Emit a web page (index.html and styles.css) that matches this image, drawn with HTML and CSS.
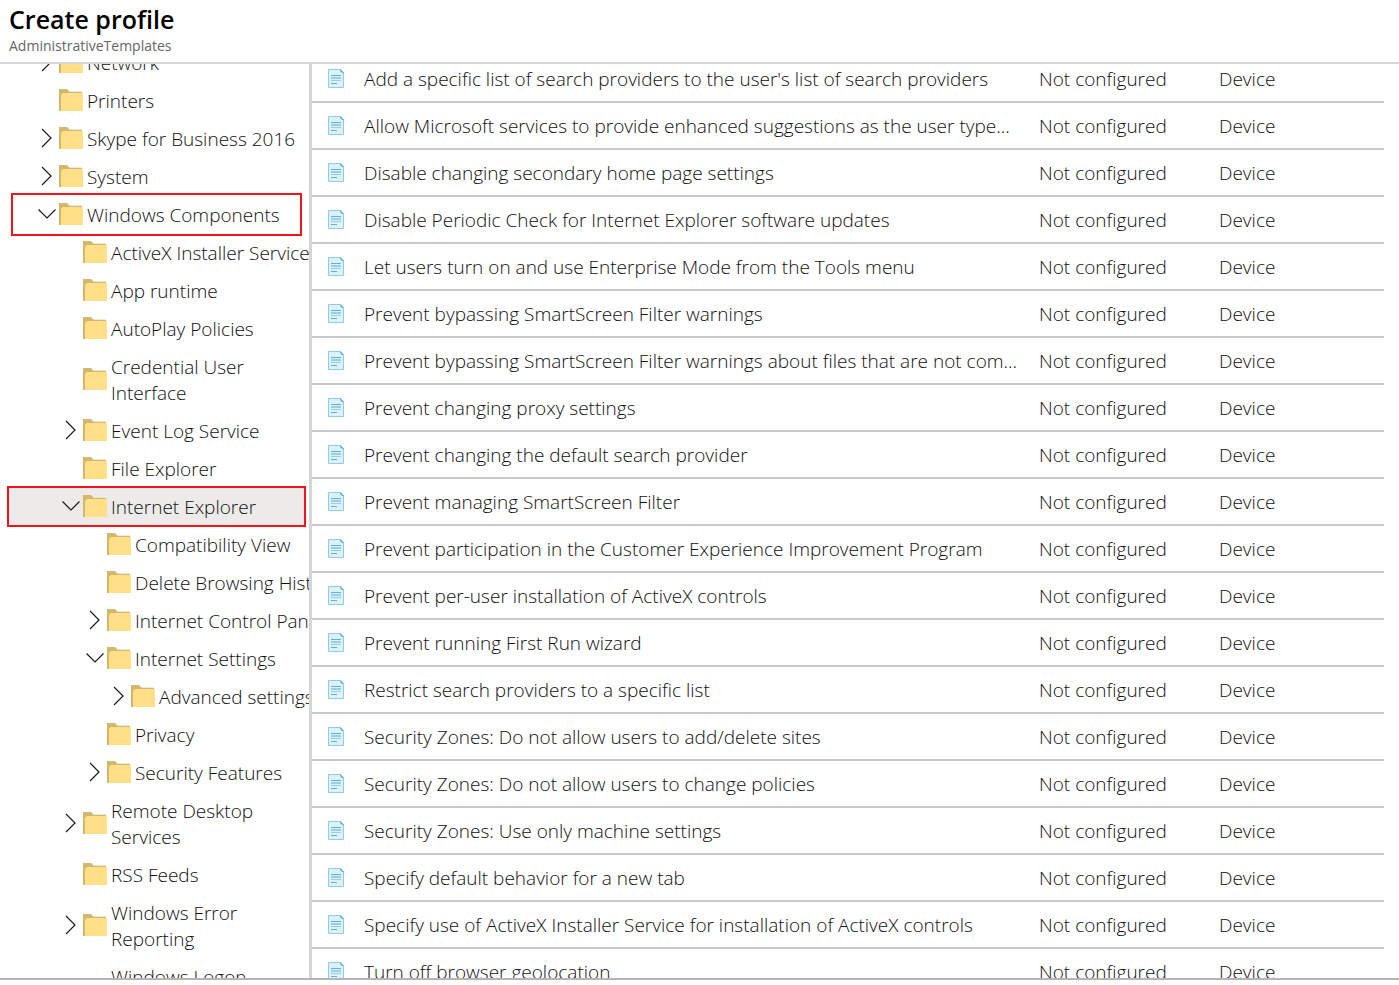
FILE: index.html
```html
<!DOCTYPE html>
<html lang="en">
<head>
<meta charset="utf-8">
<meta name="viewport" content="width=device-width, initial-scale=1">
<title>Create profile</title>
<link rel="stylesheet" href="styles.css">
</head>
<body>
<header class="header">
  <h1 class="title">Create profile</h1>
  <p class="subtitle">AdministrativeTemplates</p>
</header>
<main class="body">
  <nav class="tree-pane" aria-label="Setting categories"><ul class="tree" id="tree"></ul></nav>
  <section class="list-pane"><table class="settings"><colgroup><col class="col-icon"><col><col class="col-state"><col class="col-type"></colgroup><tbody id="rows"></tbody></table></section>
</main>
<script src="app.js"></script>
</body>
</html>
```
FILE: styles.css
```css
* { box-sizing: border-box; }
body {
  margin: 0;
  height: 100vh;
  padding-bottom: 5px;
  display: flex;
  flex-direction: column;
  font-family: "Open Sans", "Noto Sans", sans-serif;
  font-size: 19px;
  font-weight: 330;
  line-height: 26px;
  color: #111;
  background: #fff;
}
.header {
  flex: none;
  height: 64px;
  padding: 4px 9px 0;
  border-bottom: 2px solid #d6d6d6;
}
.title { margin: 0; font-size: 25px; line-height: 30px; font-weight: 600; color: #000; }
.subtitle { margin: 0; font-size: 14px; line-height: 24px; font-weight: 400; color: #666; }
.body {
  flex: 1;
  min-height: 0;
  display: flex;
  overflow: hidden;
  border-bottom: 2px solid #b5b5b5;
}
.tree-pane { flex: none; width: 312px; overflow: hidden; border-right: 3px solid #d6d6d6; }
.tree { list-style: none; margin: -20px 0 0; padding: 0 5px 0 8px; }
.node {
  position: relative;
  display: flex;
  align-items: center;
  width: 100%;
  min-height: 38px;
  padding: 6px 0;
  border: 0;
  background: none;
  font: inherit;
  color: inherit;
  text-align: left;
  white-space: nowrap;
}
.level-1 { padding-left: 27px; }
.level-2 { padding-left: 51px; }
.level-3 { padding-left: 75px; }
.level-4 { padding-left: 99px; }
.slot { flex: none; width: 24px; height: 24px; }
.slot svg { display: block; }
.label { margin-left: 4px; }
.selected { background: #edebe9; }
.marked::after { content: ""; position: absolute; border: 2px solid #f5121d; pointer-events: none; }
.branch::after { inset: -3px 2px -2px 3px; }
.selected::after { inset: -2px -2px -1px -1px; }
.list-pane { flex: 1; min-width: 0; overflow: hidden; padding-right: 15px; }
.settings { width: 100%; margin-top: -8px; border-collapse: separate; border-spacing: 0; table-layout: fixed; }
.col-icon { width: 52px; }
.col-state { width: 180px; }
.col-type { width: 165px; }
.settings td {
  height: 47px;
  padding: 0;
  border-bottom: 2px solid #c8c8c8;
  white-space: nowrap;
}
.settings .name { padding-right: 12px; overflow: hidden; text-overflow: ellipsis; }
.settings .icon { padding-left: 16px; }
.icon svg { display: block; }
```
FILE: app.js
```js
const folder = '<svg width="24" height="24" viewBox="0 0 24 24"><path fill="#d2b76e" d="M0 0h8l3 3h12v5H3v14H0z"/><path fill="#efe8d2" d="M9 1l2 2h12V2H10z"/><path fill="#ffdf87" d="M4 4h19l1 1v17H2V6z"/></svg>';
const right = '<svg width="24" height="24" viewBox="0 0 24 24"><path fill="none" stroke="#1b1b1b" stroke-width="1.2" d="M7 2l9 9-9 9"/></svg>';
const down = '<svg width="24" height="24" viewBox="0 0 24 24"><path fill="none" stroke="#1b1b1b" stroke-width="1.2" d="M3.5 6.5L12 15l8.500-8.500"/></svg>';
const page = '<svg width="16" height="20" viewBox="0 0 16 20"><path fill="#dff1f8" stroke="#8dcde5" d="M.5.5h12l3 3v15H.5z"/><path fill="#59b4d9" d="M12 0l4 4h-2l-2-2z"/><path fill="#59b4d9" d="M3 6h10v1H3zM3 14h6v1H3z"/><path fill="#94d0e8" d="M3 8h10v2H3zM3 11h10v1H3z"/></svg>';

// level, state (r = collapsed, d = expanded), label, extra classes
const nodes = [
  [1, 'r', 'Network'], [1, '', 'Printers'], [1, 'r', 'Skype for Business 2016'], [1, 'r', 'System'],
  [1, 'd', 'Windows Components', 'marked branch'],
  [2, '', 'ActiveX Installer Service'], [2, '', 'App runtime'], [2, '', 'AutoPlay Policies'],
  [2, '', 'Credential User<br>Interface'], [2, 'r', 'Event Log Service'], [2, '', 'File Explorer'],
  [2, 'd', 'Internet Explorer', 'marked selected'],
  [3, '', 'Compatibility View'], [3, '', 'Delete Browsing History'], [3, 'r', 'Internet Control Panel'],
  [3, 'd', 'Internet Settings'], [4, 'r', 'Advanced settings'], [3, '', 'Privacy'], [3, 'r', 'Security Features'],
  [2, 'r', 'Remote Desktop<br>Services'], [2, '', 'RSS Feeds'], [2, 'r', 'Windows Error<br>Reporting'],
  [2, 'plain', 'Windows Logon']
];
document.getElementById('tree').innerHTML = nodes.map(([level, state, label, extra = '']) =>
  `<li><button type="button" class="node level-${level} ${extra}"><span class="slot">${state === 'r' ? right : state === 'd' ? down : ''}</span><span class="slot">${state === 'plain' ? '' : folder}</span><span class="label">${label}</span></button></li>`).join('');

const settings = [
  "Add a specific list of search providers to the user's list of search providers",
  'Allow Microsoft services to provide enhanced suggestions as the user type...',
  'Disable changing secondary home page settings',
  'Disable Periodic Check for Internet Explorer software updates',
  'Let users turn on and use Enterprise Mode from the Tools menu',
  'Prevent bypassing SmartScreen Filter warnings',
  'Prevent bypassing SmartScreen Filter warnings about files that are not com...',
  'Prevent changing proxy settings',
  'Prevent changing the default search provider',
  'Prevent managing SmartScreen Filter',
  'Prevent participation in the Customer Experience Improvement Program',
  'Prevent per-user installation of ActiveX controls',
  'Prevent running First Run wizard',
  'Restrict search providers to a specific list',
  'Security Zones: Do not allow users to add/delete sites',
  'Security Zones: Do not allow users to change policies',
  'Security Zones: Use only machine settings',
  'Specify default behavior for a new tab',
  'Specify use of ActiveX Installer Service for installation of ActiveX controls',
  'Turn off browser geolocation'
];
document.getElementById('rows').innerHTML = settings.map(name =>
  `<tr><td class="icon">${page}</td><td class="name">${name}</td><td>Not configured</td><td>Device</td></tr>`).join('');
```
